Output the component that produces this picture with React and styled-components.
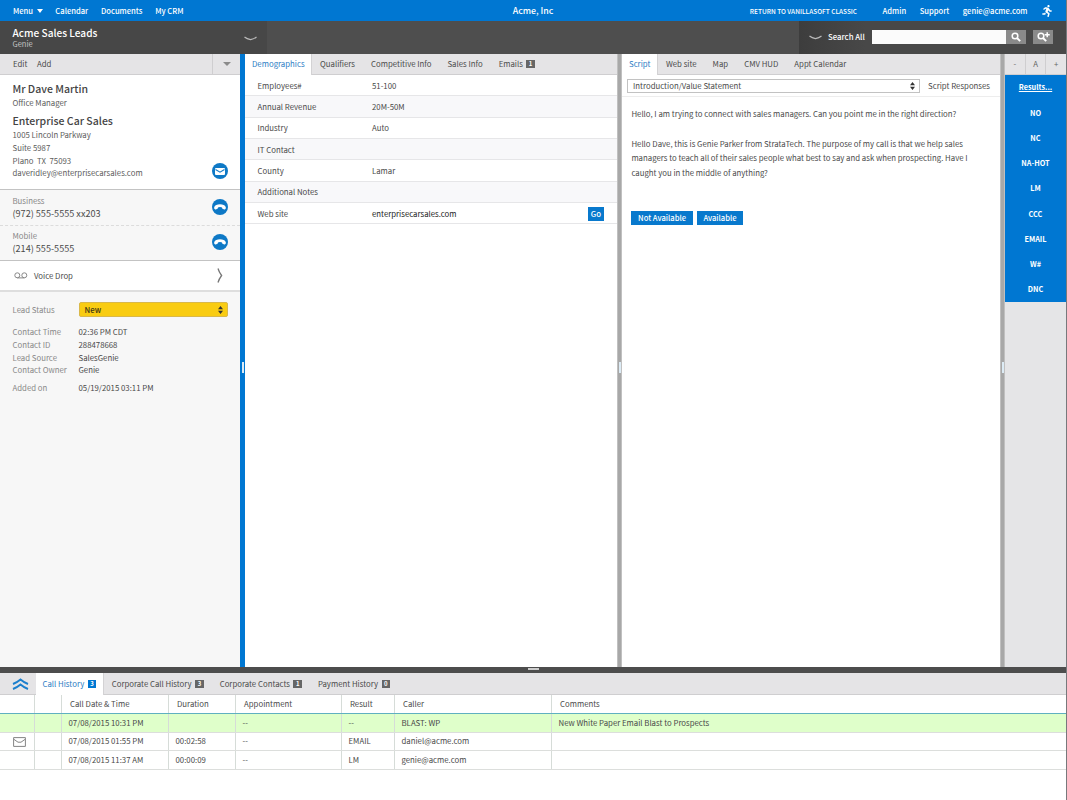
import styled, { createGlobalStyle } from "styled-components";
import { FaRunning } from "react-icons/fa";

const blue = "#0077d2";

const GlobalStyle = createGlobalStyle`
  * {
    box-sizing: border-box;
  }
  body {
    margin: 0;
    font-family: "Noto Sans CJK SC", "Open Sans", sans-serif;
    font-size: 7.8px;
    line-height: 12px;
    color: #4a4a4a;
  }
`;

const Page = styled.div`
  width: 1067px;
  height: 800px;
  display: flex;
  flex-direction: column;
  overflow: hidden;
  background: #fff;
  border-right: 1px solid #77797c;
  white-space: nowrap;
`;

const TopBar = styled.nav`
  height: 21px;
  flex: none;
  display: grid;
  grid-template-columns: 1fr auto 1fr;
  align-items: center;
  padding: 0 13px;
  background: ${blue};
  color: #fff;
  font-size: 7.6px;
  font-weight: 500;
`;

const NavGroup = styled.div`
  display: flex;
  align-items: center;
  justify-content: ${(p) => (p.$end ? "flex-end" : "flex-start")};
  gap: ${(p) => (p.$end ? 13.5 : 12.8)}px;
`;

const NavLink = styled.a`
  display: flex;
  align-items: center;
  gap: 3.5px;
`;

const Classic = styled.a`
  font-size: 6.5px;
  margin-right: 12px;
`;

const Company = styled.div`
  font-size: 8.8px;
`;

const Caret = styled.i`
  border: ${(p) => p.$size || 3}px solid transparent;
  border-top: 4px solid currentColor;
  border-bottom: 0;
`;

const Header = styled.header`
  height: 33px;
  flex: none;
  display: flex;
  background: #4e4e4e;
  color: #fff;
`;

const Project = styled.div`
  width: 267px;
  display: flex;
  align-items: center;
  justify-content: space-between;
  padding: 0 10px 2px 12.5px;
  background: #474747;

  svg {
    margin-top: 3px;
  }
`;

const ProjectName = styled.div`
  font-size: 10.1px;
  line-height: 13px;
  font-weight: 500;
`;

const ProjectUser = styled.div`
  font-size: 7.5px;
  line-height: 9px;
  color: #c4c4c4;
`;

const Search = styled.div`
  width: 267px;
  margin-left: auto;
  display: flex;
  align-items: center;
  padding: 0 13px 1px 10px;
  background: linear-gradient(90deg, #3d3d3d, #484848 25%);
`;

const SearchLabel = styled.span`
  margin: 0 auto 0 6px;
  font-weight: 500;
`;

const SearchInput = styled.input`
  width: 134px;
  height: 14px;
  padding: 0;
  border: 0;
  background: #fbfbfb;
`;

const SearchButton = styled.button`
  width: 20px;
  height: 14px;
  margin-left: ${(p) => p.$gap || 0}px;
  padding: 0;
  border: 0;
  display: flex;
  align-items: center;
  justify-content: center;
  background: #8a8a8a;
  color: #fff;
`;

const Main = styled.main`
  height: 613px;
  flex: none;
  display: flex;
`;

const Toolbar = styled.div`
  height: ${(p) => p.$height || 21}px;
  flex: none;
  display: flex;
  background: #e5e4e6;
  border-bottom: 1px solid #cfced0;
`;

const Divider = styled.div`
  width: 5px;
  flex: none;
  display: flex;
  align-items: center;
  justify-content: center;
  background: ${(p) => (p.$active ? blue : "#a8a8a8")};
  border: solid ${(p) => (p.$active ? blue : "#c0c0c0")};
  border-width: 0 1px;
`;

const Grip = styled.span`
  width: 2px;
  height: 11px;
  margin-top: 13px;
  background: #dcebf5;
`;

const Sidebar = styled.aside`
  width: 240px;
  flex: none;
  display: flex;
  flex-direction: column;
  background: #f7f7f7;
`;

const EditBar = styled(Toolbar)`
  align-items: center;
  gap: 9.5px;
  padding-left: 13px;
`;

const Dropdown = styled.div`
  width: 28px;
  height: 20px;
  margin-left: auto;
  display: flex;
  align-items: center;
  justify-content: center;
  border-left: 1px solid #cfced0;
  color: #8b8b8b;
`;

const Contact = styled.section`
  height: 115px;
  display: flex;
  align-items: flex-end;
  justify-content: space-between;
  padding: 0 12.5px 10px;
  background: #fff;
  border-bottom: 1px solid #c3c3c3;
`;

const ContactName = styled.h2`
  margin: 0;
  font-size: 10.5px;
  line-height: 14px;
  font-weight: 500;
  color: #444;
`;

const ContactLine = styled.div`
  height: ${(p) => p.$height || 12.7}px;
  line-height: 13px;
  color: #5c5c5c;
`;

const Round = styled.div`
  width: 16px;
  height: 16px;
  flex: none;
  display: flex;
  align-items: center;
  justify-content: center;
  border-radius: 50%;
  background: #0e79c6;
  color: #fff;
`;

const Phone = styled.div`
  height: 35.5px;
  flex: none;
  display: flex;
  align-items: center;
  justify-content: space-between;
  padding: 0 12.5px 1px;
  border-bottom: 1px ${(p) => (p.$last ? "solid #c3c3c3" : "dashed #dcdcdc")};
`;

const PhoneType = styled.div`
  line-height: 12px;
  color: #888;
`;

const PhoneNumber = styled.div`
  font-size: 9.1px;
  line-height: 12px;
`;

const VoiceDrop = styled.div`
  height: 31px;
  flex: none;
  display: flex;
  align-items: center;
  gap: 6px;
  padding: 0 17px 0 14px;
  background: #fff;
  border-bottom: 2px solid #dedede;

  svg:last-child {
    margin-left: auto;
  }
`;

const Details = styled.dl`
  margin: 9.5px 0 0;
  padding: 0 12.5px;
  display: grid;
  grid-template-columns: 66px 149px;
  align-items: center;
  grid-template-rows: 16px 7.5px 13px 13px 13px 12px 23px;
`;

const Term = styled.dt`
  color: #888;
`;

const Value = styled.dd`
  margin: 0;
`;

const Spacer = styled.div`
  grid-column: 1 / -1;
`;

const Status = styled.div`
  height: 15px;
  display: flex;
  align-items: center;
  justify-content: space-between;
  padding: 0 4px 0 5px;
  background: #f9cc12;
  border: 1px solid #d9b84a;
  border-radius: 2px;
  color: #3b3415;
  font-weight: 500;
`;

const Panel = styled.section`
  width: ${(p) => p.$width}px;
  flex: none;
  background: #fff;
`;

const Tab = styled.div`
  height: ${(p) => (p.$active ? "calc(100% + 1px)" : "100%")};
  display: flex;
  align-items: center;
  gap: 3.5px;
  padding: ${(p) => (p.$active ? "0 6.5px 1px 7px" : "0 8px")};
  color: ${(p) => (p.$active ? "#2b7cc4" : "#4b4b4b")};
  background: ${(p) => (p.$active ? "#fff" : "none")};
  border-right: ${(p) => (p.$active ? "1px solid #d3d2d4" : "0")};
`;

const Count = styled.span`
  min-width: 8.5px;
  height: 8px;
  font-size: 6px;
  line-height: 8px;
  font-weight: 700;
  text-align: center;
  color: #fff;
  background: ${(p) => (p.$active ? blue : "#666")};
`;

const Field = styled.div`
  height: 21.33px;
  display: flex;
  align-items: center;
  padding: 1px 13px 0 12.5px;
  background: ${(p) => (p.$shaded ? "#f8f8fa" : "#fff")};
  border-bottom: 1px solid #e6e6e8;
`;

const FieldName = styled.div`
  width: 114.5px;
`;

const SiteLink = styled.a`
  color: #222;
`;

const BlueButton = styled.button`
  height: 14px;
  margin: 0;
  padding: 0 ${(p) => p.$pad || 6.7}px;
  border: 0;
  background: #0879cd;
  color: #fff;
  font: inherit;
  font-weight: 500;
  line-height: 12px;
`;

const GoButton = styled(BlueButton)`
  margin-left: auto;
`;

const ScriptBar = styled.div`
  height: 22px;
  display: flex;
  align-items: center;
  justify-content: space-between;
  padding: 0 10px 0 5px;
  border-bottom: 1px solid #ededed;
`;

const ScriptSelect = styled.div`
  width: 293px;
  height: 14px;
  display: flex;
  align-items: center;
  justify-content: space-between;
  padding: 0 4px 0 5px;
  border: 1px solid #c2c2c2;
`;

const ScriptText = styled.div`
  padding: 10.4px 9.4px;
  line-height: 14.6px;
`;

const Paragraph = styled.p`
  margin: 0 0 14.6px;
`;

const Answers = styled.div`
  display: flex;
  gap: 4px;
  margin-top: 31px;
  font-size: 7.6px;
`;

const Results = styled.aside`
  flex: 1;
  background: #e5e5e7;
`;

const Zoom = styled.div`
  flex: 1;
  display: flex;
  align-items: center;
  justify-content: center;
  color: #666;

  & + & {
    border-left: 1px solid #cfced0;
  }
`;

const Result = styled.div`
  height: 25.25px;
  display: flex;
  align-items: center;
  justify-content: center;
  padding-bottom: 0.5px;
  background: ${blue};
  color: #fff;
  font-size: 7.3px;
  font-weight: 700;
  text-decoration: ${(p) => (p.$link ? "underline" : "none")};
`;

const Splitter = styled.div`
  height: 6px;
  flex: none;
  display: flex;
  justify-content: center;
  background: #4d4d4d;

  &::after {
    content: "";
    width: 11px;
    height: 2px;
    margin-top: 1px;
    background: #ccc;
  }
`;

const Collapse = styled.div`
  width: 35.5px;
  display: flex;
  align-items: center;
  justify-content: flex-end;
  padding-right: 7px;
`;

const Table = styled.div`
  flex: 1;
`;

const Row = styled.div`
  height: ${(p) => (p.$head ? 19 : 18.6)}px;
  display: grid;
  grid-template-columns: 35px 27px 107px 67px 106px 53px 157px 1fr;
  background: ${(p) => (p.$green ? "#dfffca" : "#fff")};
  border-bottom: 1px solid ${(p) => (p.$head ? "#5fb0c0" : "#dcdedc")};
`;

const Cell = styled.div`
  display: flex;
  align-items: center;
  padding-left: ${(p) => (p.$head ? 8 : 6.5)}px;
  border-right: 1px solid #d6dcd8;

  &:last-child {
    border-right: 0;
  }
`;

const MailCell = styled(Cell)`
  padding: 2px 0 0 13px;
`;

const Chevron = () => (
  <svg width="13" height="5" viewBox="0 0 13 5" fill="none" stroke="#bbb" strokeWidth="1.2">
    <path d="M.5 1 Q3 3 6.5 3.6 Q10 3 12.5 1" />
  </svg>
);

const UpDown = () => (
  <svg width="5" height="8" viewBox="0 0 5 8" fill="#333">
    <path d="M0 3.2 2.5 0 5 3.2zM0 4.8h5L2.5 8z" />
  </svg>
);

const Envelope = () => (
  <svg width="13" height="10" viewBox="0 0 13 10" fill="none" stroke="#858585">
    <path d="M.6.6h11.8v8.8H.6z" />
    <path d="M1 2.4 5 5.2h3l4-2.8" />
  </svg>
);

const MailIcon = () => (
  <svg width="10" height="7" viewBox="0 0 10 7">
    <rect width="10" height="7" rx="1" fill="#fff" />
    <path d="M.5 1.5 5 4.2 9.5 1.5" fill="none" stroke="#0e79c6" strokeWidth="1.1" />
  </svg>
);

const Handset = () => (
  <svg width="12" height="6" viewBox="0 0 12 6" fill="#fff">
    <path d="M6 .3C3.2.3.9 1.3.3 2.9c-.3.8-.1 1.7.3 2.2.3.4.7.5 1.2.3l1.6-.6c.5-.2.6-.5.5-1.2C4.8 2.9 7.2 2.9 8.1 3.6c-.1.7 0 1 .5 1.2l1.600.6c.5.2.9.1 1.200-.3.4-.5.6-1.400.3-2.200C11.1 1.3 8.8.3 6 .3z" />
  </svg>
);

const SearchIcon = ({ plus }) => (
  <svg width={plus ? 13 : 10} height="10" viewBox={plus ? "0 0 13 10" : "0 0 10 10"} fill="none" stroke="#fff" strokeWidth="1.5">
    <circle cx="4" cy="4" r="2.8" />
    <path d="M6 6 9.2 9.2" strokeWidth="1.9" />
    {plus && <path d="M10.2 .2v5M7.7 2.7h5" />}
  </svg>
);

const resultCodes = ["NO", "NC", "NA-HOT", "LM", "CCC", "EMAIL", "W#", "DNC"];

const fields = [
  ["Employees#", "51-100"],
  ["Annual Revenue", "20M-50M"],
  ["Industry", "Auto"],
  ["IT Contact", ""],
  ["County", "Lamar"],
  ["Additional Notes", ""],
];

const columns = ["", "", "Call Date & Time", "Duration", "Appointment", "Result", "Caller", "Comments"];

const calls = [
  ["", "07/08/2015 10:31 PM", "", "--", "--", "BLAST: WP", "New White Paper Email Blast to Prospects"],
  ["", "07/08/2015 01:55 PM", "00:02:58", "--", "EMAIL", "daniel@acme.com", ""],
  ["", "07/08/2015 11:37 AM", "00:00:09", "--", "LM", "genie@acme.com", ""],
];

const ContactPanel = () => (
  <Sidebar>
    <EditBar>
      <span>Edit</span>
      <span>Add</span>
      <Dropdown>
        <Caret $size={4} />
      </Dropdown>
    </EditBar>
    <Contact>
      <div>
        <ContactName>Mr Dave Martin</ContactName>
        <ContactLine $height={18}>Office Manager</ContactLine>
        <ContactName>Enterprise Car Sales</ContactName>
        <ContactLine>1005 Lincoln Parkway</ContactLine>
        <ContactLine>Suite 5987</ContactLine>
        <ContactLine>Plano&nbsp; TX&nbsp; 75093</ContactLine>
        <ContactLine>daveridley@enterprisecarsales.com</ContactLine>
      </div>
      <Round>
        <MailIcon />
      </Round>
    </Contact>
    <Phone>
      <div>
        <PhoneType>Business</PhoneType>
        <PhoneNumber>(972) 555-5555 xx203</PhoneNumber>
      </div>
      <Round>
        <Handset />
      </Round>
    </Phone>
    <Phone $last>
      <div>
        <PhoneType>Mobile</PhoneType>
        <PhoneNumber>(214) 555-5555</PhoneNumber>
      </div>
      <Round>
        <Handset />
      </Round>
    </Phone>
    <VoiceDrop>
      <svg width="14" height="7" viewBox="0 0 14 7" fill="none" stroke="#888">
        <circle cx="3.3" cy="3.3" r="2.5" />
        <circle cx="10.3" cy="3.3" r="2.5" />
        <path d="M3.3 5.9h7" />
      </svg>
      Voice Drop
      <svg width="6" height="15" viewBox="0 0 6 15" fill="none" stroke="#777" strokeWidth="1.3">
        <path d="M1 .5 Q2 4 4.6 7.5 Q2 11 1 14.5" />
      </svg>
    </VoiceDrop>
    <Details>
      <Term>Lead Status</Term>
      <Status>
        New <UpDown />
      </Status>
      <Spacer />
      <Term>Contact Time</Term>
      <Value>02:36 PM CDT</Value>
      <Term>Contact ID</Term>
      <Value>288478668</Value>
      <Term>Lead Source</Term>
      <Value>SalesGenie</Value>
      <Term>Contact Owner</Term>
      <Value>Genie</Value>
      <Term>Added on</Term>
      <Value>05/19/2015 03:11 PM</Value>
    </Details>
  </Sidebar>
);

const Demographics = () => (
  <Panel $width={372}>
    <Toolbar>
      <Tab $active>Demographics</Tab>
      <Tab>Qualifiers</Tab>
      <Tab>Competitive Info</Tab>
      <Tab>Sales Info</Tab>
      <Tab>
        Emails <Count>1</Count>
      </Tab>
    </Toolbar>
    {fields.map(([name, value], i) => (
      <Field key={name} $shaded={i % 2 === 1}>
        <FieldName>{name}</FieldName>
        {value}
      </Field>
    ))}
    <Field>
      <FieldName>Web site</FieldName>
      <SiteLink>enterprisecarsales.com</SiteLink>
      <GoButton $pad={3}>Go</GoButton>
    </Field>
  </Panel>
);

const Script = () => (
  <Panel $width={378}>
    <Toolbar>
      <Tab $active>Script</Tab>
      <Tab>Web site</Tab>
      <Tab>Map</Tab>
      <Tab>CMV HUD</Tab>
      <Tab>Appt Calendar</Tab>
    </Toolbar>
    <ScriptBar>
      <ScriptSelect>
        Introduction/Value Statement <UpDown />
      </ScriptSelect>
      Script Responses
    </ScriptBar>
    <ScriptText>
      <Paragraph>
        Hello, I am trying to connect with sales managers. Can you point me in the right direction?
      </Paragraph>
      <Paragraph>
        Hello Dave, this is Genie Parker from StrataTech. The purpose of my call is that we help sales
        <br />
        managers to teach all of their sales people what best to say and ask when prospecting. Have I
        <br />
        caught you in the middle of anything?
      </Paragraph>
      <Answers>
        <BlueButton>Not Available</BlueButton>
        <BlueButton>Available</BlueButton>
      </Answers>
    </ScriptText>
  </Panel>
);

const History = () => (
  <>
    <Toolbar $height={22}>
      <Collapse>
        <svg width="17" height="12" viewBox="0 0 17 12" fill="none" stroke="#1b7fcd" strokeWidth="1.9">
          <path d="M1 6 Q5 4.5 8.5 1.5 Q12 4.5 16 6M1 11 Q5 9.5 8.5 6.5 Q12 9.5 16 11" />
        </svg>
      </Collapse>
      <Tab $active>
        Call History <Count $active>3</Count>
      </Tab>
      <Tab>
        Corporate Call History <Count>3</Count>
      </Tab>
      <Tab>
        Corporate Contacts <Count>1</Count>
      </Tab>
      <Tab>
        Payment History <Count>0</Count>
      </Tab>
    </Toolbar>
    <Table>
      <Row $head>
        {columns.map((title, i) => (
          <Cell key={i} $head>
            {title}
          </Cell>
        ))}
      </Row>
      {calls.map((cells, r) => (
        <Row key={r} $green={r === 0}>
          <MailCell>{r === 1 && <Envelope />}</MailCell>
          {cells.map((text, i) => (
            <Cell key={i}>{text}</Cell>
          ))}
        </Row>
      ))}
    </Table>
  </>
);

const App = () => {
  return (
    <Page>
      <GlobalStyle />
      <TopBar>
        <NavGroup>
          <NavLink>
            Menu <Caret />
          </NavLink>
          <NavLink>Calendar</NavLink>
          <NavLink>Documents</NavLink>
          <NavLink>My CRM</NavLink>
        </NavGroup>
        <Company>Acme, Inc</Company>
        <NavGroup $end>
          <Classic>RETURN TO VANILLASOFT CLASSIC</Classic>
          <NavLink>Admin</NavLink>
          <NavLink>Support</NavLink>
          <NavLink>genie@acme.com</NavLink>
          <FaRunning size={12} />
        </NavGroup>
      </TopBar>
      <Header>
        <Project>
          <div>
            <ProjectName>Acme Sales Leads</ProjectName>
            <ProjectUser>Genie</ProjectUser>
          </div>
          <Chevron />
        </Project>
        <Search>
          <Chevron />
          <SearchLabel>Search All</SearchLabel>
          <SearchInput />
          <SearchButton>
            <SearchIcon />
          </SearchButton>
          <SearchButton $gap={7}>
            <SearchIcon plus />
          </SearchButton>
        </Search>
      </Header>
      <Main>
        <ContactPanel />
        <Divider $active>
          <Grip />
        </Divider>
        <Demographics />
        <Divider>
          <Grip />
        </Divider>
        <Script />
        <Divider>
          <Grip />
        </Divider>
        <Results>
          <Toolbar>
            <Zoom>-</Zoom>
            <Zoom>A</Zoom>
            <Zoom>+</Zoom>
          </Toolbar>
          <Result $link>Results...</Result>
          {resultCodes.map((code) => (
            <Result key={code}>{code}</Result>
          ))}
        </Results>
      </Main>
      <Splitter />
      <History />
    </Page>
  );
};

export default App;
